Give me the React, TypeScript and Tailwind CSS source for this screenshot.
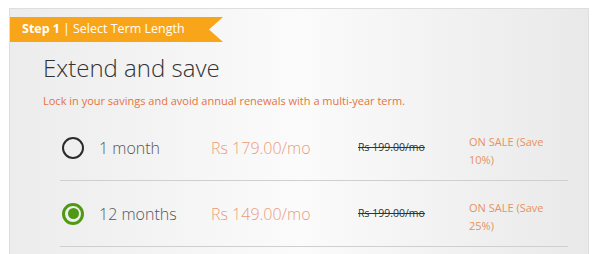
import React, { useState } from 'react'

const font = { fontFamily: '"Open Sans", "Noto Sans", sans-serif' }

const plans = [
  { id: '1', label: '1 month', price: 'Rs 179.00/mo', was: 'Rs 199.00/mo', save: '10%' },
  { id: '12', label: '12 months', price: 'Rs 149.00/mo', was: 'Rs 199.00/mo', save: '25%' },
]

function Radio({ checked }: { checked: boolean }) {
  if (checked) {
    return (
      <span className="w-[22px] h-[22px] rounded-full border-[3px] border-[#4f9a12] flex items-center justify-center">
        <span className="w-[11px] h-[11px] rounded-full bg-[#4f9a12]" />
      </span>
    )
  }
  return <span className="w-[22px] h-[22px] rounded-full border-[2.5px] border-[#2b2b2b]" />
}

export default function App() {
  const [selected, setSelected] = useState('12')

  return (
    <div className="w-[600px] h-[254px] overflow-hidden bg-white pt-[8px] pl-[9px] pr-[11px]" style={font}>
      {/* panel with soft left/right shading */}
      <div className="h-[260px] border border-b-0 border-[#dedede] bg-linear-to-r from-[#ececec] via-[#fbfbfb] to-[#e9e9e9]">
        {/* step ribbon */}
        <div className="mt-[8px] w-[213px] h-[25px] bg-[#f9a51a] flex items-center pl-[12px] text-white text-[12.5px] [clip-path:polygon(0_0,100%_0,calc(100%-14px)_50%,100%_100%,0_100%)]">
          <span className="font-bold">Step 1</span>
          <span className="mx-[3px]">|</span>
          <span>Select Term Length</span>
        </div>

        <div className="pl-[33px]">
          <h1 className="mt-[10px] text-[24px] leading-[32px] font-light text-[#333]">Extend and save</h1>
          <p className="mt-[10px] text-[11px] leading-[14px] text-[#e5733f]">
            Lock in your savings and avoid annual renewals with a multi-year term.
          </p>
        </div>

        <div className="ml-[50px] w-[508px] mt-[7px]">
          {plans.map((p) => (
            <button
              key={p.id}
              type="button"
              onClick={() => setSelected(p.id)}
              className="w-full h-[66px] flex items-center border-b border-[#cfcfcf] pl-[2px] text-left"
            >
              <Radio checked={selected === p.id} />
              <span className="ml-[15px] w-[112px] text-[16px] font-light text-[#555]">{p.label}</span>
              <span className="w-[147px] text-[16px] font-light text-[#eb9c78]">{p.price}</span>
              <span className="w-[111px] text-[10.5px] text-[#333] line-through">{p.was}</span>
              <span className="mt-[6px] w-[90px] text-[11px] leading-[18px] text-[#e8925f]">
                ON SALE (Save {p.save})
              </span>
            </button>
          ))}
        </div>
      </div>
    </div>
  )
}
